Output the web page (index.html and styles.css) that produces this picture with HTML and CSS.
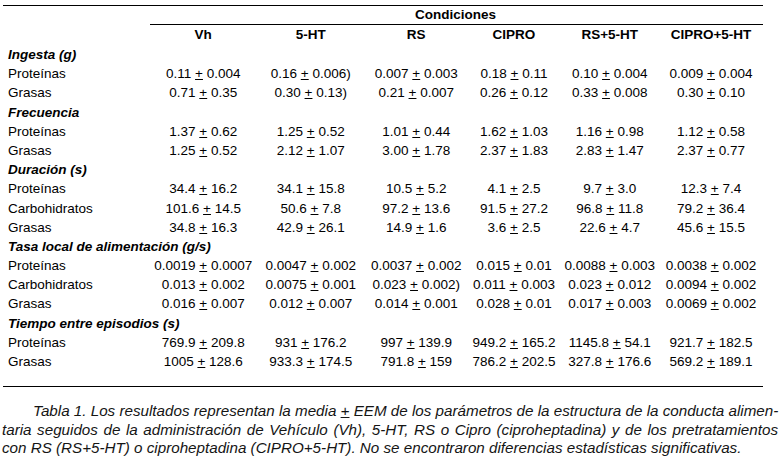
FILE: index.html
```html
<!DOCTYPE html>
<html lang="es">
<head>
<meta charset="utf-8">
<title>Tabla 1</title>
<link rel="stylesheet" href="styles.css">
</head>
<body>
<div class="table">
  <div class="row cond-row"><div></div><div class="cond">Condiciones</div></div>
  <div class="row head"><div></div><div>Vh</div><div>5-HT</div><div>RS</div><div>CIPRO</div><div>RS+5-HT</div><div>CIPRO+5-HT</div></div>

  <div class="row sec"><div>Ingesta (g)</div></div>
  <div class="row"><div>Proteínas</div><div>0.11 <u>+</u> 0.004</div><div>0.16 <u>+</u> 0.006)</div><div>0.007 <u>+</u> 0.003</div><div>0.18 <u>+</u> 0.11</div><div>0.10 <u>+</u> 0.004</div><div>0.009 <u>+</u> 0.004</div></div>
  <div class="row"><div>Grasas</div><div>0.71 <u>+</u> 0.35</div><div>0.30 <u>+</u> 0.13)</div><div>0.21 <u>+</u> 0.007</div><div>0.26 <u>+</u> 0.12</div><div>0.33 <u>+</u> 0.008</div><div>0.30 <u>+</u> 0.10</div></div>

  <div class="row sec"><div>Frecuencia</div></div>
  <div class="row"><div>Proteínas</div><div>1.37 <u>+</u> 0.62</div><div>1.25 <u>+</u> 0.52</div><div>1.01 <u>+</u> 0.44</div><div>1.62 <u>+</u> 1.03</div><div>1.16 <u>+</u> 0.98</div><div>1.12 <u>+</u> 0.58</div></div>
  <div class="row"><div>Grasas</div><div>1.25 <u>+</u> 0.52</div><div>2.12 <u>+</u> 1.07</div><div>3.00 <u>+</u> 1.78</div><div>2.37 <u>+</u> 1.83</div><div>2.83 <u>+</u> 1.47</div><div>2.37 <u>+</u> 0.77</div></div>

  <div class="row sec"><div>Duración (s)</div></div>
  <div class="row"><div>Proteínas</div><div>34.4 <u>+</u> 16.2</div><div>34.1 <u>+</u> 15.8</div><div>10.5 <u>+</u> 5.2</div><div>4.1 <u>+</u> 2.5</div><div>9.7 <u>+</u> 3.0</div><div>12.3 <u>+</u> 7.4</div></div>
  <div class="row"><div>Carbohidratos</div><div>101.6 <u>+</u> 14.5</div><div>50.6 <u>+</u> 7.8</div><div>97.2 <u>+</u> 13.6</div><div>91.5 <u>+</u> 27.2</div><div>96.8 <u>+</u> 11.8</div><div>79.2 <u>+</u> 36.4</div></div>
  <div class="row"><div>Grasas</div><div>34.8 <u>+</u> 16.3</div><div>42.9 <u>+</u> 26.1</div><div>14.9 <u>+</u> 1.6</div><div>3.6 <u>+</u> 2.5</div><div>22.6 <u>+</u> 4.7</div><div>45.6 <u>+</u> 15.5</div></div>

  <div class="row sec"><div>Tasa local de alimentación (g/s)</div></div>
  <div class="row"><div>Proteínas</div><div>0.0019 <u>+</u> 0.0007</div><div>0.0047 <u>+</u> 0.002</div><div>0.0037 <u>+</u> 0.002</div><div>0.015 <u>+</u> 0.01</div><div>0.0088 <u>+</u> 0.003</div><div>0.0038 <u>+</u> 0.002</div></div>
  <div class="row"><div>Carbohidratos</div><div>0.013 <u>+</u> 0.002</div><div>0.0075 <u>+</u> 0.001</div><div>0.023 <u>+</u> 0.002)</div><div>0.011 <u>+</u> 0.003</div><div>0.023 <u>+</u> 0.012</div><div>0.0094 <u>+</u> 0.002</div></div>
  <div class="row"><div>Grasas</div><div>0.016 <u>+</u> 0.007</div><div>0.012 <u>+</u> 0.007</div><div>0.014 <u>+</u> 0.001</div><div>0.028 <u>+</u> 0.01</div><div>0.017 <u>+</u> 0.003</div><div>0.0069 <u>+</u> 0.002</div></div>

  <div class="row sec"><div>Tiempo entre episodios (s)</div></div>
  <div class="row"><div>Proteínas</div><div>769.9 <u>+</u> 209.8</div><div>931 <u>+</u> 176.2</div><div>997 <u>+</u> 139.9</div><div>949.2 <u>+</u> 165.2</div><div>1145.8 <u>+</u> 54.1</div><div>921.7 <u>+</u> 182.5</div></div>
  <div class="row"><div>Grasas</div><div>1005 <u>+</u> 128.6</div><div>933.3 <u>+</u> 174.5</div><div>791.8 <u>+</u> 159</div><div>786.2 <u>+</u> 202.5</div><div>327.8 <u>+</u> 176.6</div><div>569.2 <u>+</u> 189.1</div></div>
</div>

<div class="caption">
  <span class="line first">Tabla 1. Los resultados representan la media <u>+</u> EEM de los parámetros de la estructura de la conducta alimen-</span>
  <span class="line">taria seguidos de la administración de Vehículo (Vh), 5-HT, RS o Cipro (ciproheptadina) y de los pretratamientos</span>
  <span class="line last">con RS (RS+5-HT) o ciproheptadina (CIPRO+5-HT). No se encontraron diferencias estadísticas significativas.</span>
</div>
</body>
</html>
```
FILE: styles.css
```css
html, body {
  margin: 0;
  padding: 0;
  background: #fff;
}

body {
  font-family: "Liberation Sans", Arial, sans-serif;
  font-size: 13.5px;
  color: #000;
  overflow: hidden;
}

.table {
  margin: 5px 0 0 3px;
  width: 760px;
  border-top: 1px solid #000;
  border-bottom: 1px solid #000;
  padding-bottom: 15px;
}

.row {
  display: grid;
  grid-template-columns: 147px 106.5px 108.5px 102.5px 93px 98.5px 104px;
  height: 19.2px;
  line-height: 19.2px;
  white-space: nowrap;
}

.row > div {
  text-align: center;
}

.row > div:first-child {
  text-align: left;
  padding-left: 5px;
}

.cond-row {
  height: 19px;
  line-height: 18px;
}

.cond {
  grid-column: 2 / 8;
  font-weight: bold;
  border-bottom: 1px solid #000;
  text-align: center;
  padding-right: 2px;
}

.head {
  height: 20px;
  line-height: 20px;
  font-weight: bold;
}

.sec > div:first-child {
  grid-column: 1 / 8;
  font-weight: bold;
  font-style: italic;
}

u {
  text-decoration: underline;
  text-underline-offset: 1px;
  text-decoration-thickness: 1px;
}

.caption {
  margin: 15px 0 0 2px;
  width: 776px;
  font-family: "Liberation Sans", Arial, sans-serif;
  font-style: italic;
  font-size: 15.2px;
  line-height: 18.5px;
  color: #151515;
}

.line {
  display: block;
  white-space: nowrap;
  text-align: justify;
  text-align-last: justify;
}

.line.first {
  text-indent: 31px;
}

.line.last {
  text-align-last: left;
}
```
